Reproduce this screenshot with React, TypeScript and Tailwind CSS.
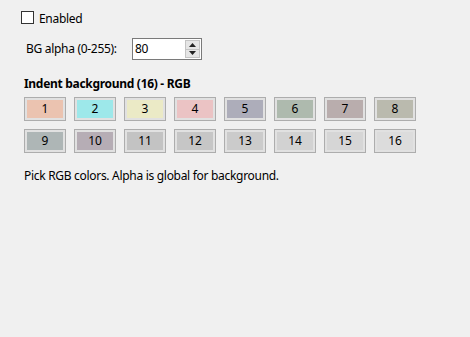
import React from "react";

const colors = [
  "#ebc3b0", "#9de8ea", "#ebeac6", "#ebc3c4", "#adadba", "#aebaae", "#b9adad", "#babaae",
  "#aeb6b6", "#b6adb5", "#c3c3c3", "#c6c6c6", "#cbcbcb", "#d2d2d2", "#d6d6d6", "#dcdcdc",
];

function Swatch({ n, c }: { n: number; c: string }) {
  return (
    <div className="w-[42px] h-[24px] border border-[#adadad] bg-[#e1e1e1] p-[2px] flex">
      <div className="flex-1 flex items-center justify-center text-[12px] text-black leading-none" style={{ background: c }}>
        {n}
      </div>
    </div>
  );
}

export default function App() {
  return (
    <div
      className="w-[470px] h-[337px] bg-[#f0f0f0] text-black text-[12px] tracking-[-0.3px] relative"
      style={{ fontFamily: '"Segoe UI", "Noto Sans", sans-serif' }}
    >
      <div className="flex flex-col pl-[21px] pt-[11px]">
        <div className="flex items-center h-[13px]">
          <div className="w-[13px] h-[13px] border border-[#333] bg-white" />
          <span className="ml-[5px] leading-none mt-[2px]">Enabled</span>
        </div>
        <div className="flex items-center mt-[14px] h-[22px]">
          <span className="ml-[5px] w-[106px] leading-none">BG alpha (0-255):</span>
          <div className="w-[70px] h-[22px] border border-[#7a7a7a] bg-white flex items-stretch">
            <span className="flex-1 pl-[2px] pt-[2px] leading-[16px]">80</span>
            <div className="w-[15px] flex flex-col my-[1px] mr-[1px]">
              <div className="flex-1 bg-[#e5e5e5] border border-[#c4c4c4] flex items-center justify-center">
                <svg width="7" height="4" viewBox="0 0 7 4"><path d="M0 4 L3.5 0 L7 4 Z" fill="#222" /></svg>
              </div>
              <div className="flex-1 bg-[#e5e5e5] border border-[#c4c4c4] border-t-0 flex items-center justify-center">
                <svg width="7" height="4" viewBox="0 0 7 4"><path d="M0 0 L3.5 4 L7 0 Z" fill="#222" /></svg>
              </div>
            </div>
          </div>
        </div>
        <div className="ml-[3px] mt-[18px] font-bold leading-none">Indent background (16) - RGB</div>
        <div className="ml-[3px] mt-[7px] grid grid-cols-[repeat(8,42px)] gap-x-[8px] gap-y-[8px] tracking-normal">
          {colors.map((c, i) => (
            <Swatch key={i} n={i + 1} c={c} />
          ))}
        </div>
        <div className="ml-[3px] mt-[17px] leading-none">Pick RGB colors. Alpha is global for background.</div>
      </div>
    </div>
  );
}
